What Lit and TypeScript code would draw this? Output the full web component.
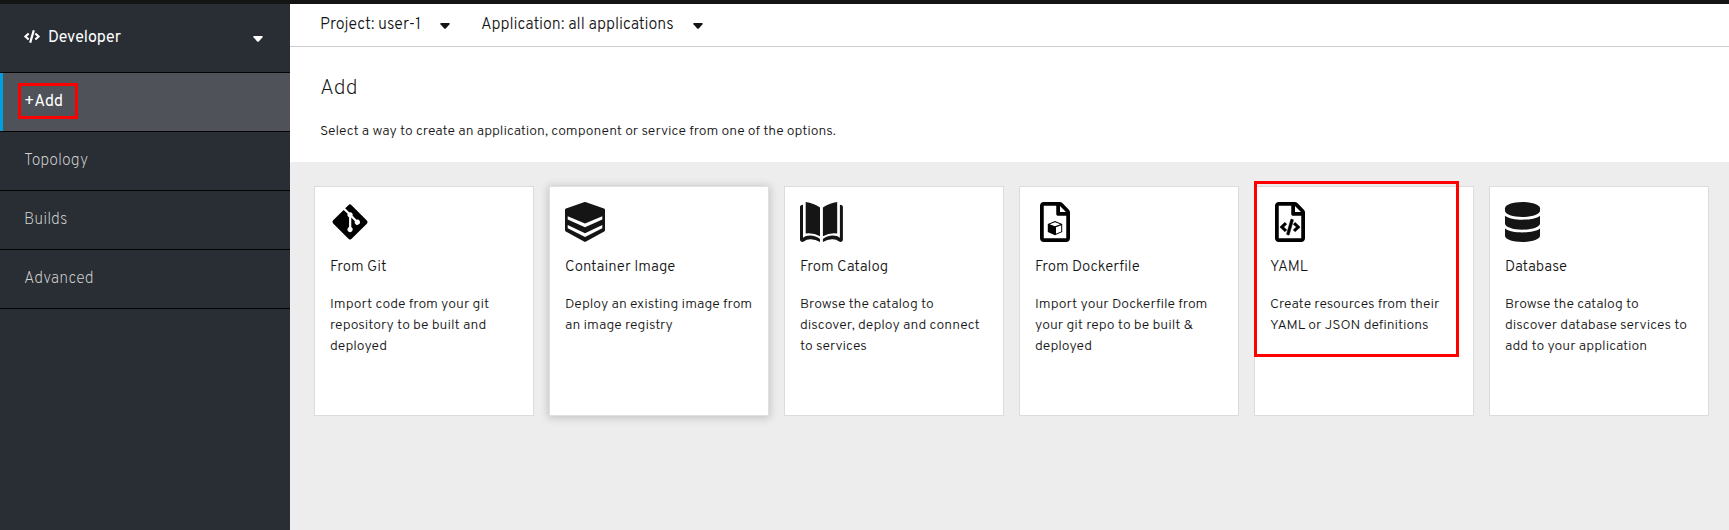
import { LitElement, html, svg, css } from "lit";
import { customElement, property } from "lit/decorators.js";
import { classMap } from "lit/directives/class-map.js";

const CODE_PATH =
  "M278.9 511.5l-61-17.7c-6.4-1.8-10-8.5-8.2-14.9L346.2 8.7c1.8-6.4 8.5-10 14.9-8.2l61 17.7c6.4 1.8 10 8.5 8.2 14.9L293.8 503.3c-1.9 6.4-8.5 10.1-14.9 8.2zm-114-112.2l43.5-46.4c4.6-4.9 4.3-12.7-.8-17.2L117 256l90.6-79.7c5.1-4.5 5.5-12.3.8-17.2l-43.5-46.4c-4.5-4.8-12.1-5.1-17-.5L3.8 247.2c-5.1 4.7-5.1 12.8 0 17.5l144.1 135.1c4.9 4.6 12.5 4.4 17-.5zm327.2.6l144.1-135.1c5.1-4.7 5.1-12.8 0-17.5L492.1 112.1c-4.8-4.5-12.4-4.3-17 .5L431.6 159c-4.6 4.9-4.3 12.7.8 17.2L523 256l-90.6 79.7c-5.1 4.5-5.5 12.3-.8 17.2l43.5 46.4c4.5 4.9 12.1 5.1 17 .6z";
const FILE_PATH =
  "M369.9 97.9L286 14C277 5 264.8-.1 252.1-.1H48C21.5 0 0 21.5 0 48v416c0 26.5 21.5 48 48 48h288c26.5 0 48-21.5 48-48V131.9c0-12.7-5.1-25-14.1-34zM332.1 128H256V51.9l76.1 76.1zM48 464V48h160v104c0 13.3 10.7 24 24 24h104v288H48z";
const GIT_PATH =
  "M439.55 236.05L244 40.45a28.87 28.87 0 0 0-40.81 0l-40.66 40.63 51.52 51.52c27.06-9.14 52.68 16.77 43.39 43.68l49.66 49.66c34.23-11.8 61.18 31 35.47 56.69-26.49 26.49-70.21-2.87-56-37.34L240.22 199v121.85c25.3 12.54 22.26 41.85 9.08 55a34.34 34.34 0 0 1-48.55 0c-17.57-17.6-11.07-46.91 11.25-56v-123c-20.8-8.51-24.6-30.74-18.64-45L142.57 101 8.45 235.14a28.86 28.86 0 0 0 0 40.81l195.61 195.6a28.86 28.86 0 0 0 40.8 0l194.69-194.69a28.86 28.86 0 0 0 0-40.81z";

const fileShape = svg`<path transform="translate(5 0) scale(0.078125)" d=${FILE_PATH} />`;

const icons = {
  git: svg`<path fill="#000" transform="translate(2.5 0) scale(0.078125)" d=${GIT_PATH} />`,
  layers: svg`
    <path d="M18.9 0.3Q20 -0.1 21.1 0.3L39 6.6Q40 7 40 8V28Q40 29 39.2 29.5L21 39.6Q20 40.2 19 39.6L0.8 29.5Q0 29 0 28V8Q0 7 1 6.6Z" />
    <path fill="#fff" d="M2.7 14.2L20 21.6L37.3 14.2V17.5L20 25.3L2.7 17.5ZM2.7 22.9L20 31.2L37.3 22.9V26.2L20 34.9L2.7 26.2Z" />`,
  book: svg`
    <path d="M5.7 0Q13.8 1.2 20 5.6V34.2Q13.8 30.6 5.7 31.4Z" />
    <path d="M37.2 0Q29.1 1.2 22.9 5.6V34.2Q29.1 30.6 37.2 31.4Z" />
    <path d="M3 2.8V35.7Q5.3 33.5 10 33.5Q16 33.6 20 37.1V39.9Q15.5 37.4 11 37.2Q6.5 37 4.2 39.2Q2.5 40.4 1 39.5Q0 39 0 37.5V5Q0 3 3 2.8Z" />
    <path d="M39.9 2.8V35.7Q37.6 33.5 32.9 33.5Q26.9 33.6 22.9 37.1V39.9Q27.4 37.4 31.9 37.2Q36.4 37 38.7 39.2Q40.4 40.4 41.9 39.5Q42.9 39 42.9 37.5V5Q42.9 3 39.9 2.8Z" />`,
  docker: svg`
    <g fill="#000">${fileShape}
      <path d="M20 19L27.2 22V30L20 33.2L12.8 30V22Z" />
      <path fill="#fff" d="M20 20.2L25.4 22.3L20 24.2L14.6 22.3ZM21 25.2L26.2 23.3V29.4L21 31.7Z" />
    </g>`,
  yaml: svg`
    <g fill="#000">${fileShape}
      <path stroke="#000" stroke-width="16" transform="translate(10 17.1) scale(0.03125)" d=${CODE_PATH} />
    </g>`,
  database: svg`
    <path d="M0 6.2C0 2.8 7.8 0 17.5 0S35 2.8 35 6.2V8.8C35 12.2 27.2 15 17.5 15S0 12.2 0 8.8Z" />
    <path d="M0 13.7C3.5 16.5 10 17.7 17.5 17.7S31.5 16.5 35 13.7V21.5C35 24.9 27.2 27.7 17.5 27.7S0 24.9 0 21.5Z" />
    <path d="M0 26.5C3.5 29.2 10 30.4 17.5 30.4S31.5 29.2 35 26.5V33.8C35 37.2 27.2 40 17.5 40S0 37.2 0 33.8Z" />`,
};

interface Option {
  icon: keyof typeof icons;
  title: string;
  lines: string[];
  hovered?: boolean;
  marked?: boolean;
}

const OPTIONS: Option[] = [
  { icon: "git", title: "From Git", lines: ["Import code from your git", "repository to be built and", "deployed"] },
  { icon: "layers", title: "Container Image", lines: ["Deploy an existing image from", "an image registry"], hovered: true },
  { icon: "book", title: "From Catalog", lines: ["Browse the catalog to", "discover, deploy and connect", "to services"] },
  { icon: "docker", title: "From Dockerfile", lines: ["Import your Dockerfile from", "your git repo to be built &", "deployed"] },
  { icon: "yaml", title: "YAML", lines: ["Create resources from their", "YAML or JSON definitions"], marked: true },
  { icon: "database", title: "Database", lines: ["Browse the catalog to", "discover database services to", "add to your application"] },
];

const caret = html`<svg class="caret" width="10" height="6" viewBox="0 0 10 6">
  <path fill="currentColor" d="M1 0H9Q10.2 0.2 9.5 1.2L5.8 5.4Q5 6.2 4.2 5.4L0.5 1.2Q-0.2 0.2 1 0Z" />
</svg>`;

@customElement("option-card")
class OptionCard extends LitElement {
  @property({ attribute: false }) option!: Option;

  static styles = css`
    :host { display: block; }
    .card {
      position: relative;
      box-sizing: border-box;
      width: 220px;
      height: 230px;
      padding: 15px;
      background: #fff;
      border: 1px solid #dcdcdc;
    }
    .hovered {
      border-color: #e0e0e0;
      box-shadow: 0 1px 8px 1px rgba(3, 3, 3, 0.18);
    }
    .icon { display: block; overflow: visible; fill: #151515; }
    .title { margin: 14px 0 0; font-size: 15px; font-weight: 300; line-height: 24px; }
    .desc { margin-top: 14px; font-size: 14px; font-weight: 300; line-height: 21px; white-space: nowrap; }
    .mark {
      position: absolute;
      left: -1px;
      top: -6px;
      box-sizing: border-box;
      width: 205px;
      height: 176px;
      border: 3px solid #f00;
    }
  `;

  render() {
    const { icon, title, lines, hovered, marked } = this.option;
    return html`<article class=${classMap({ card: true, hovered: !!hovered })}>
      <svg class="icon" width="40" height="40" viewBox="0 0 40 40">${icons[icon]}</svg>
      <h2 class="title">${title}</h2>
      <div class="desc">${lines.map((l) => html`<div>${l}</div>`)}</div>
      ${marked ? html`<div class="mark"></div>` : ""}
    </article>`;
  }
}

@customElement("app-root")
class AppRoot extends LitElement {
  static styles = css`
    :host {
      display: flex;
      flex-direction: column;
      height: 530px;
      overflow: hidden;
      background: #ededed;
      color: #151515;
      font-family: Overpass, Roboto, "Open Sans", sans-serif;
    }
    .masthead { flex: none; height: 4px; background: #151515; }
    .body { flex: 1; display: flex; min-height: 0; }
    .sidebar { flex: none; width: 290px; background: #292e34; font-size: 16px; line-height: 20px; }
    .row {
      box-sizing: border-box;
      height: 59px;
      display: flex;
      align-items: center;
      padding: 0 27px 0 24px;
      border-bottom: 1px solid #030303;
      color: #d2d2d2;
      font-weight: 200;
    }
    .perspective { height: 69px; color: #fff; font-weight: 400; }
    .code { margin: 0 8px 3px 0; }
    .perspective .caret { margin: 1px 0 0 auto; }
    .active {
      background: #4f5258;
      color: #fff;
      font-weight: 400;
      box-shadow: inset 3px 0 #00a0df;
    }
    .label { position: relative; }
    .mark {
      position: absolute;
      left: -6px;
      top: -9px;
      box-sizing: border-box;
      width: 60px;
      height: 36px;
      border: 3px solid #f00;
    }
    .content { flex: 1; display: flex; flex-direction: column; min-width: 0; }
    .context {
      box-sizing: border-box;
      flex: none;
      height: 43px;
      display: flex;
      align-items: center;
      padding: 0 30px;
      gap: 31px;
      background: #fff;
      border-bottom: 1px solid #ccc;
      font-size: 16px;
      font-weight: 300;
    }
    .picker { display: flex; align-items: center; gap: 19px; }
    .picker .caret { margin-top: 1px; }
    .heading { box-sizing: border-box; flex: none; height: 115px; padding: 26px 30px 0; background: #fff; }
    .title { margin: 0; font-size: 21.5px; font-weight: 200; line-height: 32px; }
    .lead { margin: 16px 0 0; font-size: 14px; font-weight: 300; line-height: 21px; }
    .gallery { display: flex; gap: 15px; padding: 24px; }
  `;

  render() {
    return html`
      <header class="masthead"></header>
      <div class="body">
        <nav class="sidebar">
          <div class="row perspective">
            <svg class="code" width="16" height="13" viewBox="0 0 640 512"><path fill="currentColor" d=${CODE_PATH} /></svg>
            <span>Developer</span>${caret}
          </div>
          <div class="row active"><span class="label">+Add<span class="mark"></span></span></div>
          ${["Topology", "Builds", "Advanced"].map((n) => html`<div class="row">${n}</div>`)}
        </nav>
        <main class="content">
          <div class="context">
            <div class="picker"><span>Project: user-1</span>${caret}</div>
            <div class="picker"><span>Application: all applications</span>${caret}</div>
          </div>
          <section class="heading">
            <h1 class="title">Add</h1>
            <p class="lead">Select a way to create an application, component or service from one of the options.</p>
          </section>
          <div class="gallery">
            ${OPTIONS.map((o) => html`<option-card .option=${o}></option-card>`)}
          </div>
        </main>
      </div>
    `;
  }
}
